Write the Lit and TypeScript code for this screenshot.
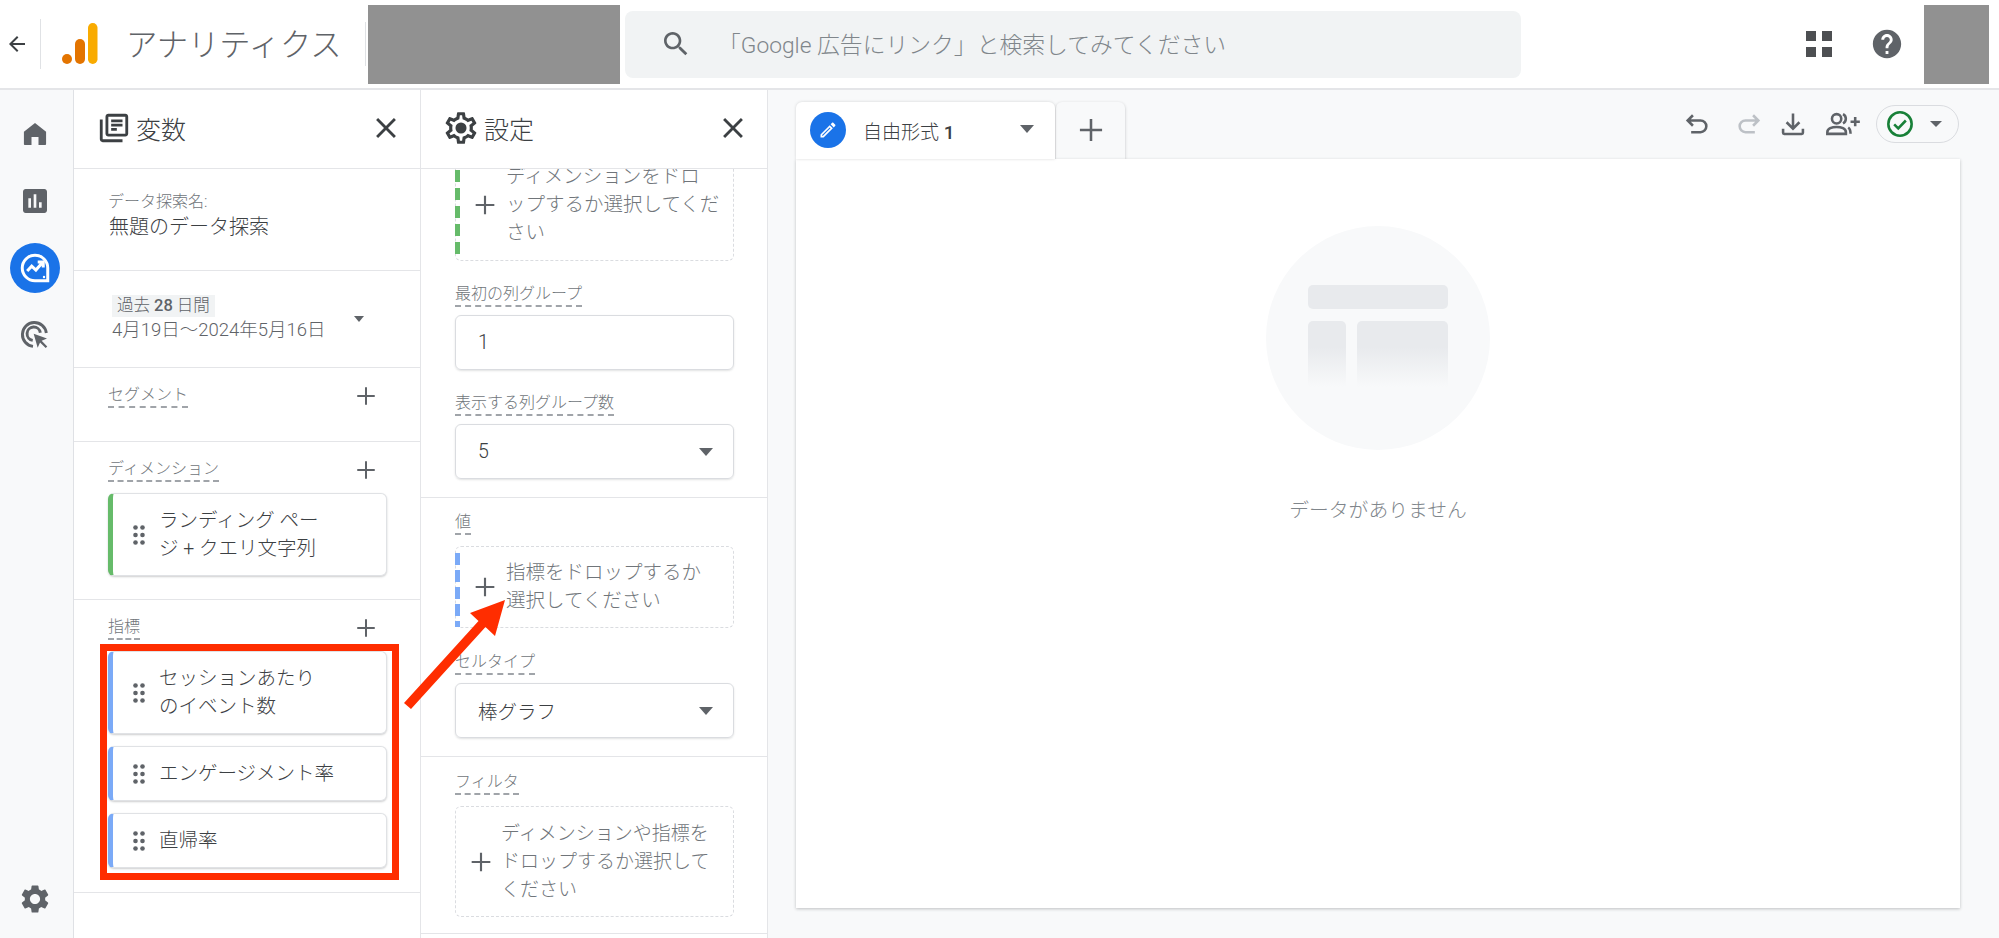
import { LitElement, css, html, svg } from 'lit';
import { customElement } from 'lit/decorators.js';

const icon = (d: string, cls = '') =>
  html`<svg class="icon ${cls}" viewBox="0 0 24 24"><path d="${d}"></path></svg>`;

const P = {
  back: 'M20 11H7.83l5.59-5.59L12 4l-8 8 8 8 1.41-1.41L7.83 13H20v-2z',
  search:
    'M15.5 14h-.79l-.28-.27C15.41 12.59 16 11.11 16 9.5 16 5.91 13.09 3 9.5 3S3 5.91 3 9.5 5.91 16 9.5 16c1.61 0 3.09-.59 4.23-1.57l.27.28v.79l5 4.99L20.49 19l-4.99-5zm-6 0C7.01 14 5 11.99 5 9.5S7.01 5 9.5 5 14 7.01 14 9.5 11.99 14 9.5 14z',
  help: 'M12 2C6.48 2 2 6.48 2 12s4.48 10 10 10 10-4.48 10-10S17.52 2 12 2zm1 17h-2v-2h2v2zm2.07-7.75l-.9.92C13.45 12.9 13 13.5 13 15h-2v-.5c0-1.1.45-2.1 1.17-2.83l1.24-1.26c.37-.36.59-.86.59-1.41 0-1.1-.9-2-2-2s-2 .9-2 2H8c0-2.21 1.79-4 4-4s4 1.79 4 4c0 .88-.36 1.68-.93 2.25z',
  home: 'M12 2.5 21.5 10v10.5c0 .6-.4 1-1 1H15v-7H9v7H3.500c-.6 0-1-.4-1-1V10z',
  chart:
    'M19 3H5c-1.1 0-2 .9-2 2v14c0 1.1.9 2 2 2h14c1.100 0 2-.9 2-2V5c0-1.100-.9-2-2-2zM9 17H7v-7h2v7zm4 0h-2V7h2v10zm4 0h-2v-4h2v4z',
  gear: 'M19.14 12.94c.04-.3.06-.61.06-.94 0-.32-.02-.64-.07-.94l2.03-1.58c.18-.14.23-.41.12-.61l-1.92-3.32c-.12-.22-.37-.29-.59-.22l-2.39.96c-.5-.38-1.03-.7-1.62-.94l-.36-2.54c-.04-.24-.24-.41-.48-.41h-3.84c-.24 0-.43.17-.47.41l-.36 2.54c-.59.24-1.13.57-1.62.94l-2.39-.96c-.22-.08-.47 0-.59.22L2.74 8.87c-.12.21-.08.47.12.61l2.03 1.58c-.05.3-.09.63-.09.94s.02.64.07.94l-2.03 1.58c-.18.14-.23.41-.12.61l1.92 3.32c.12.22.37.29.59.22l2.39-.96c.5.38 1.03.7 1.62.94l.36 2.54c.05.24.24.41.48.41h3.84c.24 0 .44-.17.47-.41l.36-2.54c.59-.24 1.13-.56 1.62-.94l2.39.96c.22.08.47 0 .59-.22l1.92-3.32c.12-.22.07-.47-.12-.61l-2.01-1.58zM12 15.6c-1.98 0-3.6-1.62-3.6-3.6s1.62-3.6 3.6-3.6 3.6 1.62 3.6 3.6-1.62 3.6-3.6 3.6z',
  gearOutline:
    'M19.43 12.98c.04-.32.07-.64.07-.98 0-.34-.03-.66-.07-.98l2.11-1.65c.19-.15.24-.42.12-.64l-2-3.46c-.09-.16-.26-.25-.44-.25-.06 0-.12.01-.17.03l-2.49 1c-.52-.4-1.08-.73-1.69-.98l-.38-2.65C14.46 2.18 14.25 2 14 2h-4c-.25 0-.46.18-.49.42l-.38 2.65c-.61.25-1.17.59-1.69.98l-2.49-1c-.06-.02-.12-.03-.18-.03-.17 0-.34.09-.43.25l-2 3.46c-.13.22-.07.49.12.64l2.11 1.65c-.04.32-.07.65-.07.98 0 .33.03.66.07.98l-2.11 1.65c-.19.15-.24.42-.12.64l2 3.46c.09.16.26.25.44.25.06 0 .12-.01.17-.03l2.49-1c.52.4 1.08.73 1.69.98l.38 2.65c.03.24.24.42.49.42h4c.25 0 .46-.18.49-.42l.38-2.65c.61-.25 1.17-.59 1.69-.98l2.49 1c.06.02.12.03.18.03.17 0 .34-.09.43-.25l2-3.46c.12-.22.07-.49-.12-.64l-2.11-1.65zm-1.98-1.71c.04.31.05.52.05.73 0 .21-.02.43-.05.73l-.14 1.13.89.7 1.08.84-.7 1.21-1.27-.51-1.04-.42-.9.68c-.43.32-.84.56-1.25.73l-1.06.43-.16 1.13-.2 1.35h-1.4l-.19-1.35-.16-1.13-1.06-.43c-.43-.18-.83-.41-1.23-.71l-.91-.7-1.06.43-1.27.51-.7-1.21 1.08-.84.89-.7-.14-1.13c-.03-.31-.05-.54-.05-.74s.02-.43.05-.73l.14-1.13-.89-.7-1.08-.84.7-1.21 1.27.51 1.04.42.9-.68c.43-.32.84-.56 1.25-.73l1.06-.43.16-1.13.2-1.35h1.39l.19 1.35.16 1.13 1.06.43c.43.18.83.41 1.23.71l.91.7 1.06-.43 1.27-.51.7 1.21-1.07.85-.89.7.14 1.13zM12 8.500a3.500 3.500 0 1 0 0 7 3.500 3.500 0 0 0 0-7z',
  close:
    'M19 6.41L17.59 5 12 10.59 6.41 5 5 6.41 10.59 12 5 17.59 6.41 19 12 13.41 17.59 19 19 17.59 13.41 12z',
  library:
    'M4 6H2v14c0 1.1.9 2 2 2h14v-2H4V6zm16-4H8c-1.1 0-2 .9-2 2v12c0 1.1.9 2 2 2h12c1.1 0 2-.9 2-2V4c0-1.1-.9-2-2-2zm0 14H8V4h12v12zM10 9h8v2h-8zm0 3h4v2h-4zm0-6h8v2h-8z',
  plus: 'M19 12.800h-6.200V19h-1.600v-6.200H5v-1.600h6.200V5h1.600v6.200H19z',
  pencil:
    'M3 17.25V21h3.75L17.81 9.94l-3.75-3.75L3 17.25zM5.920 19H5v-.92l9.060-9.060.92.92L5.920 19zM20.710 7.040c.39-.39.39-1.020 0-1.410l-2.340-2.340c-.39-.39-1.020-.39-1.410 0l-1.830 1.830 3.750 3.750 1.830-1.830z',
};

const stroke = (body: unknown, cls = '') =>
  html`<svg class="stroke ${cls}" viewBox="0 0 24 24">${body}</svg>`;

const dots = html`<svg class="dots" viewBox="0 0 12 20">
  ${[2.5, 9.5].map((x) => [2.5, 10, 17.5].map((y) => svg`<circle cx="${x}" cy="${y}" r="2.300"></circle>`))}
</svg>`;

const caret = (cls = '') => html`<span class="caret ${cls}"></span>`;

@customElement('app-root')
export class AppRoot extends LitElement {
  static styles = css`
    :host {
      display: block;
      position: relative;
      width: 1999px;
      height: 938px;
      overflow: hidden;
      background: #fff;
      font-family: Roboto, 'Noto Sans CJK JP', sans-serif;
      font-weight: 300;
      color: #3c4043;
    }
    svg {
      display: block;
      flex: none;
    }
    .icon {
      width: 28px;
      height: 28px;
      fill: #5f6368;
    }
    .stroke {
      width: 28px;
      height: 28px;
      fill: none;
      stroke: #5f6368;
      stroke-width: 2;
    }

    /* top bar */
    .top {
      display: flex;
      align-items: center;
      height: 88px;
      border-bottom: 2px solid #e4e5e8;
      padding: 0 10px 0 5px;
    }
    .top .back {
      width: 24px;
      height: 24px;
      fill: #3c4043;
    }
    .vline {
      width: 1px;
      height: 50px;
      background: #e0e2e5;
      margin-left: 11px;
    }
    .logo {
      width: 40px;
      height: 44px;
      margin-left: 19px;
    }
    .title {
      width: 239px;
      margin: 0 0 4px 26px;
      font-size: 31.300px;
      color: #5f6368;
      white-space: nowrap;
    }
    .vline.short {
      height: 44px;
      margin-left: 0;
    }
    .mask {
      background: #919191;
      height: 79px;
      flex: none;
    }
    .mask.account {
      width: 252px;
      margin-left: 2px;
    }
    .mask.user {
      width: 65px;
      margin-left: 20px;
    }
    .search {
      display: flex;
      align-items: center;
      width: 896px;
      height: 67px;
      margin-left: 5px;
      padding-left: 35px;
      box-sizing: border-box;
      background: #f1f3f4;
      border-radius: 8px;
      color: #80868b;
      font-size: 22.800px;
      white-space: nowrap;
    }
    .search .icon {
      width: 32px;
      height: 32px;
    }
    .search span {
      margin: 0 0 2px 26px;
    }
    .apps {
      display: grid;
      grid-template-columns: 10px 10px;
      gap: 6px;
      margin-left: auto;
    }
    .apps i {
      width: 10px;
      height: 10px;
      background: #4d4f52;
    }
    .help {
      width: 34px;
      height: 34px;
      margin-left: 38px;
    }

    /* layout below the top bar */
    .body {
      display: flex;
      height: 848px;
    }
    .rail {
      display: flex;
      flex-direction: column;
      flex: none;
      width: 74px;
      padding: 10px 4px 6px 0;
      box-sizing: border-box;
      background: #f8f9fa;
      border-right: 1px solid #dfe1e5;
    }
    .rail-item {
      display: flex;
      align-items: center;
      justify-content: center;
      height: 67px;
      flex: none;
    }
    .rail-item.bottom {
      margin-top: auto;
    }
    .rail-item .home {
      width: 28px;
      height: 28px;
    }
    .rail-item .chart {
      width: 32px;
      height: 32px;
    }
    .rail-item .gear {
      width: 34px;
      height: 34px;
    }
    .active {
      display: flex;
      align-items: center;
      justify-content: center;
      width: 50px;
      height: 50px;
      border-radius: 50%;
      background: #1a73e8;
    }
    .active .stroke {
      width: 36px;
      height: 36px;
      stroke: #fff;
    }
    .target {
      width: 32px;
      height: 32px;
    }

    /* panels */
    .panel {
      flex: none;
      width: 347px;
      box-sizing: border-box;
      border-right: 1px solid #e4e5e8;
      background: #fff;
      display: flex;
      flex-direction: column;
    }
    .panel-head {
      display: flex;
      align-items: center;
      flex: none;
      height: 79px;
      box-sizing: border-box;
      border-bottom: 1px solid #e4e5e8;
      padding: 0 17px 3px 23px;
      font-size: 25px;
    }
    .panel-head .icon.lead {
      width: 34px;
      height: 34px;
      fill: #3c4043;
      margin-right: 5px;
    }
    .panel-head .icon.lead.cog {
      width: 38px;
      height: 38px;
      margin: 0 4px 0 -2px;
    }
    .panel-head .name {
      flex: 1;
    }
    .panel-head .close {
      width: 34px;
      height: 34px;
      fill: #3c4043;
    }
    .section {
      box-sizing: border-box;
      border-bottom: 1px solid #e4e5e8;
      padding: 16px 42px 0 34px;
    }
    .s-name {
      height: 102px;
      padding-top: 23px;
    }
    .s-date {
      height: 97px;
      padding: 24px 56px 0 38px;
      display: flex;
      justify-content: space-between;
    }
    .s-seg {
      height: 74px;
    }
    .s-dim {
      height: 158px;
    }
    .s-met {
      height: 293px;
    }
    .explore-label {
      font-size: 16px;
      line-height: 20px;
      color: #70757a;
    }
    .explore-name {
      font-size: 20px;
      line-height: 30px;
      margin-left: 1px;
    }
    .chip {
      display: inline-block;
      height: 22px;
      line-height: 22px;
      padding: 0 5px;
      background: #f1f3f4;
      font-size: 16.500px;
      color: #5f6368;
      white-space: nowrap;
    }
    .chip b {
      font-weight: 500;
    }
    .range {
      font-size: 18.500px;
      line-height: 26px;
      color: #5f6368;
      white-space: nowrap;
    }
    .caret {
      display: block;
      flex: none;
      width: 0;
      height: 0;
      border-left: 7px solid transparent;
      border-right: 7px solid transparent;
      border-top: 8px solid #5f6368;
    }
    .caret.small {
      margin-top: 21px;
      border-left-width: 5px;
      border-right-width: 5px;
      border-top-width: 6px;
    }
    .row {
      display: flex;
      justify-content: space-between;
      align-items: flex-start;
    }
    .row .icon {
      width: 30px;
      height: 30px;
      margin: -3px -3px -3px 0;
    }
    .label {
      display: inline-block;
      font-size: 16px;
      line-height: 22px;
      color: #70757a;
      border-bottom: 2px dashed #a0a4a9;
    }
    .card {
      display: flex;
      align-items: center;
      gap: 14px;
      box-sizing: border-box;
      width: 279px;
      margin-top: 12px;
      padding-left: 20px;
      height: 55px;
      background: #fff;
      border: 1px solid #e0e2e5;
      border-left: 5px solid #7baaf7;
      border-radius: 6px;
      box-shadow: 0 1px 2px rgba(60, 64, 67, 0.25);
      font-size: 19.500px;
      line-height: 28px;
    }
    .card.first {
      margin-top: 11px;
    }
    .card.tall {
      height: 83px;
    }
    .card.green {
      border-left-color: #66bb6a;
    }
    .dots {
      width: 12px;
      height: 20px;
      fill: #5f6368;
    }

    /* settings column */
    .scroll {
      flex: 1;
      overflow: hidden;
    }
    .group {
      box-sizing: border-box;
      border-bottom: 1px solid #e4e5e8;
      padding: 0 34px;
      display: flow-root;
    }
    .g1 {
      height: 329px;
    }
    .g2 {
      height: 259px;
      padding-top: 13px;
    }
    .g3 {
      height: 177px;
      padding-top: 14px;
    }
    .drop {
      position: relative;
      display: flex;
      align-items: center;
      box-sizing: border-box;
      width: 279px;
      padding-left: 13px;
      margin-top: 11px;
      border: 1px dashed #dadce0;
      border-radius: 6px;
      color: #70757a;
      font-size: 19.500px;
      line-height: 28px;
      white-space: nowrap;
    }
    .drop .icon {
      width: 32px;
      height: 32px;
    }
    .drop .txt {
      margin-left: 5px;
    }
    .drop.first {
      margin-top: -20px;
      height: 112px;
    }
    .drop.metric {
      height: 82px;
    }
    .drop.filter {
      height: 111px;
      padding-left: 9px;
    }
    .drop.filter .txt {
      margin-left: 4px;
      font-size: 19px;
    }
    .drop.first::before,
    .drop.metric::before {
      content: '';
      position: absolute;
      left: -1px;
      top: 6px;
      bottom: 0;
      width: 5px;
      background: repeating-linear-gradient(180deg, #7baaf7 0 12px, transparent 12px 17px);
    }
    .drop.first::before {
      background: repeating-linear-gradient(180deg, #66bb6a 0 12px, transparent 12px 18px);
      top: 20px;
    }
    .gap-l {
      margin-top: 22px;
    }
    .gap-c {
      margin-top: 23px;
    }
    .field {
      display: flex;
      align-items: center;
      justify-content: space-between;
      box-sizing: border-box;
      width: 279px;
      height: 55px;
      margin-top: 8px;
      padding: 0 20px 0 22px;
      border: 1px solid #dadce0;
      border-radius: 6px;
      box-shadow: 0 1px 2px rgba(60, 64, 67, 0.15);
      font-size: 19.500px;
    }

    /* report area */
    .main {
      flex: 1;
      min-width: 0;
      background: #f8f9fa;
      padding: 12px 39px 0 28px;
    }
    .tabs {
      display: flex;
      height: 57px;
    }
    .tab {
      display: flex;
      align-items: center;
      width: 259px;
      box-sizing: border-box;
      padding: 0 21px 0 14px;
      background: #fff;
      border-radius: 6px 6px 0 0;
      box-shadow: 0 0 3px rgba(60, 64, 67, 0.2);
      position: relative;
      z-index: 1;
      font-size: 19px;
    }
    .tab .pen {
      display: flex;
      align-items: center;
      justify-content: center;
      width: 36px;
      height: 36px;
      border-radius: 50%;
      background: #1a73e8;
      flex: none;
      margin-top: -2px;
    }
    .tab .pen svg {
      width: 20px;
      height: 20px;
      fill: #fff;
    }
    .tab .tname {
      flex: 1;
      margin-left: 17px;
      white-space: nowrap;
    }
    .tab > .caret {
      margin-top: -4px;
    }
    .tab b {
      font-weight: 500;
    }
    .add {
      display: flex;
      align-items: center;
      justify-content: center;
      width: 69px;
      margin-left: 1px;
      border-radius: 6px 6px 0 0;
      background: #f8f9fa;
      box-shadow: 0 1px 3px rgba(60, 64, 67, 0.3);
    }
    .add .icon {
      width: 38px;
      height: 38px;
      margin-top: -2px;
    }
    .tools {
      display: flex;
      align-items: center;
      margin: 3px 1px 0 auto;
      height: 38px;
    }
    .tools .stroke {
      stroke-width: 2.200;
    }
    .tools .off {
      stroke: #bdc1c6;
      margin-left: 24px;
    }
    .tools .dl {
      margin-left: 16px;
    }
    .tools .pa {
      width: 36px;
      margin-left: 18px;
    }
    .pill {
      display: flex;
      align-items: center;
      box-sizing: border-box;
      width: 83px;
      height: 38px;
      margin-left: 15px;
      padding-left: 9px;
      border: 1px solid #dadce0;
      border-radius: 19px;
    }
    .tools .pill .ok {
      stroke: #188038;
    }
    .pill .caret {
      margin-left: 16px;
      border-left-width: 6px;
      border-right-width: 6px;
      border-top-width: 6px;
    }
    .canvas {
      position: relative;
      display: flex;
      flex-direction: column;
      align-items: center;
      height: 749px;
      background: #fff;
      box-shadow: 0 1px 3px rgba(60, 64, 67, 0.3);
      padding-top: 67px;
      box-sizing: border-box;
    }
    .blank {
      box-sizing: border-box;
      width: 224px;
      height: 224px;
      padding: 59px 42px 0;
      border-radius: 50%;
      background: #f8f9fa;
    }
    .blank .bar {
      height: 24px;
      border-radius: 5px;
      background: #e8eaed;
    }
    .blank .cols {
      display: flex;
      gap: 11px;
      margin-top: 12px;
    }
    .blank .cols i {
      display: block;
      height: 66px;
      width: 38px;
      border-radius: 5px 5px 0 0;
      background: linear-gradient(#e8eaed 40%, #f8f9fa);
    }
    .blank .cols i + i {
      width: 91px;
    }
    .empty {
      margin-top: 46px;
      line-height: 30px;
      font-size: 19.800px;
      color: #80868b;
    }

    /* annotation */
    .redbox {
      position: absolute;
      left: 100px;
      top: 644px;
      width: 299px;
      height: 236px;
      box-sizing: border-box;
      border: 7px solid #ff2d00;
    }
    .arrow {
      position: absolute;
      left: 400px;
      top: 590px;
      width: 120px;
      height: 130px;
      fill: #ff2d00;
    }
  `;

  render() {
    return html`
      <div class="top">
        ${icon(P.back, 'back')}
        <div class="vline"></div>
        <svg class="logo" viewBox="0 0 40 44">
          <circle cx="7" cy="37" r="5" fill="#e37400"></circle>
          <rect x="15" y="17" width="10" height="25" rx="5" fill="#e37400"></rect>
          <rect x="28" y="1" width="9.500" height="41" rx="4.700" fill="#f9ab00"></rect>
        </svg>
        <div class="title">アナリティクス</div>
        <div class="vline short"></div>
        <div class="mask account"></div>
        <div class="search">
          ${icon(P.search)}
          <span>「Google 広告にリンク」と検索してみてください</span>
        </div>
        <div class="apps"><i></i><i></i><i></i><i></i></div>
        ${icon(P.help, 'help')}
        <div class="mask user"></div>
      </div>
      <div class="body">
        <nav class="rail">
          <div class="rail-item">${icon(P.home, 'home')}</div>
          <div class="rail-item">${icon(P.chart, 'chart')}</div>
          <div class="rail-item">
            <div class="active">
              ${stroke(svg`
                <path d="M12 3.500a8.500 8.500 0 1 0 0 17h8.500V12A8.500 8.500 0 0 0 12 3.500z"></path>
                <path d="M6.800 14l3-3.200 2.800 2.600 4.400-5M13.800 8h3.700v3.700"></path>
                <circle cx="18" cy="18" r=".8" fill="#fff" stroke="none"></circle>`)}
            </div>
          </div>
          <div class="rail-item">
            ${stroke(svg`
              <path d="M20.500 10.500A9 9 0 1 0 10.500 20.500" stroke-width="2.200"></path>
              <path d="M16 10.300A5 5 0 1 0 10.300 16" stroke-width="2.200"></path>
              <path d="M11 11l10 3.600-4 1.800 4.200 4.200-1.200 1.200-4.200-4.200-1.800 4z" fill="#5f6368" stroke="none"></path>`, 'target')}
          </div>
          <div class="rail-item bottom">${icon(P.gear, 'gear')}</div>
        </nav>

        <section class="panel">
          <div class="panel-head">
            ${icon(P.library, 'lead')}
            <div class="name">変数</div>
            ${icon(P.close, 'close')}
          </div>
          <div class="section s-name">
            <div class="explore-label">データ探索名:</div>
            <div class="explore-name">無題のデータ探索</div>
          </div>
          <div class="section s-date">
            <div>
              <div class="chip">過去 <b>28</b> 日間</div>
              <div class="range">4月19日〜2024年5月16日</div>
            </div>
            ${caret('small')}
          </div>
          <div class="section s-seg">
            <div class="row"><span class="label">セグメント</span>${icon(P.plus)}</div>
          </div>
          <div class="section s-dim">
            <div class="row"><span class="label">ディメンション</span>${icon(P.plus)}</div>
            <div class="card tall green first">${dots}<div>ランディング ペー<br />ジ + クエリ文字列</div></div>
          </div>
          <div class="section s-met">
            <div class="row"><span class="label">指標</span>${icon(P.plus)}</div>
            <div class="card tall first">${dots}<div>セッションあたり<br />のイベント数</div></div>
            <div class="card">${dots}<div>エンゲージメント率</div></div>
            <div class="card">${dots}<div>直帰率</div></div>
          </div>
        </section>

        <section class="panel">
          <div class="panel-head">
            ${icon(P.gearOutline, 'lead cog')}
            <div class="name">設定</div>
            ${icon(P.close, 'close')}
          </div>
          <div class="scroll">
            <div class="group g1">
              <div class="drop first">
                ${icon(P.plus)}
                <div class="txt">ディメンションをドロ<br />ップするか選択してくだ<br />さい</div>
              </div>
              <div class="gap-l"><span class="label">最初の列グループ</span></div>
              <div class="field">1</div>
              <div class="gap-l"><span class="label">表示する列グループ数</span></div>
              <div class="field">5 ${caret()}</div>
            </div>
            <div class="group g2">
              <span class="label">値</span>
              <div class="drop metric">
                ${icon(P.plus)}
                <div class="txt">指標をドロップするか<br />選択してください</div>
              </div>
              <div class="gap-c"><span class="label">セルタイプ</span></div>
              <div class="field">棒グラフ ${caret()}</div>
            </div>
            <div class="group g3">
              <span class="label">フィルタ</span>
              <div class="drop filter">
                ${icon(P.plus)}
                <div class="txt">ディメンションや指標を<br />ドロップするか選択して<br />ください</div>
              </div>
            </div>
          </div>
        </section>

        <main class="main">
          <div class="tabs">
            <div class="tab">
              <span class="pen">${icon(P.pencil)}</span>
              <span class="tname">自由形式 <b>1</b></span>
              ${caret()}
            </div>
            <div class="add">${icon(P.plus)}</div>
            <div class="tools">
              ${stroke(svg`<path d="M8.500 4.500 4 9l4.500 4.500M4 9h11a5 5 0 0 1 0 10H7"></path>`)}
              ${stroke(svg`<path d="M15.500 4.500 20 9l-4.500 4.500M20 9H9a5 5 0 0 0 0 10h8"></path>`, 'off')}
              ${stroke(svg`<path d="M12 3v13M6.500 10.500 12 16l5.500-5.500M3.500 16v3.500c0 .6.400 1 1 1h15c.6 0 1-.4 1-1V16"></path>`, 'dl')}
              <svg class="stroke pa" viewBox="0 0 31 24">
                <circle cx="10" cy="7.500" r="4"></circle>
                <path d="M2 20.500v-1.500c0-3 4-4.500 8-4.500s8 1.500 8 4.500v1.500z"></path>
                <path d="M15.500 3.500a4.500 4.500 0 0 1 0 8M20 15c1.500 1 2 2.500 2 5.500"></path>
                <path d="M26 6v8M22 10h8"></path>
              </svg>
              <div class="pill">
                ${stroke(svg`<circle cx="12" cy="12" r="10"></circle><path d="M7 12.300l3.500 3.500 6.500-6.800"></path>`, 'ok')}
                ${caret()}
              </div>
            </div>
          </div>
          <div class="canvas">
            <div class="blank">
              <div class="bar"></div>
              <div class="cols"><i></i><i></i></div>
            </div>
            <div class="empty">データがありません</div>
          </div>
        </main>
      </div>

      <div class="redbox"></div>
      <svg class="arrow" viewBox="400 590 120 130">
        <polygon points="505,600 495,636 485.500,627 411,709 404,703 478.500,621 470,613"></polygon>
      </svg>
    `;
  }
}

declare global {
  interface HTMLElementTagNameMap {
    'app-root': AppRoot;
  }
}
